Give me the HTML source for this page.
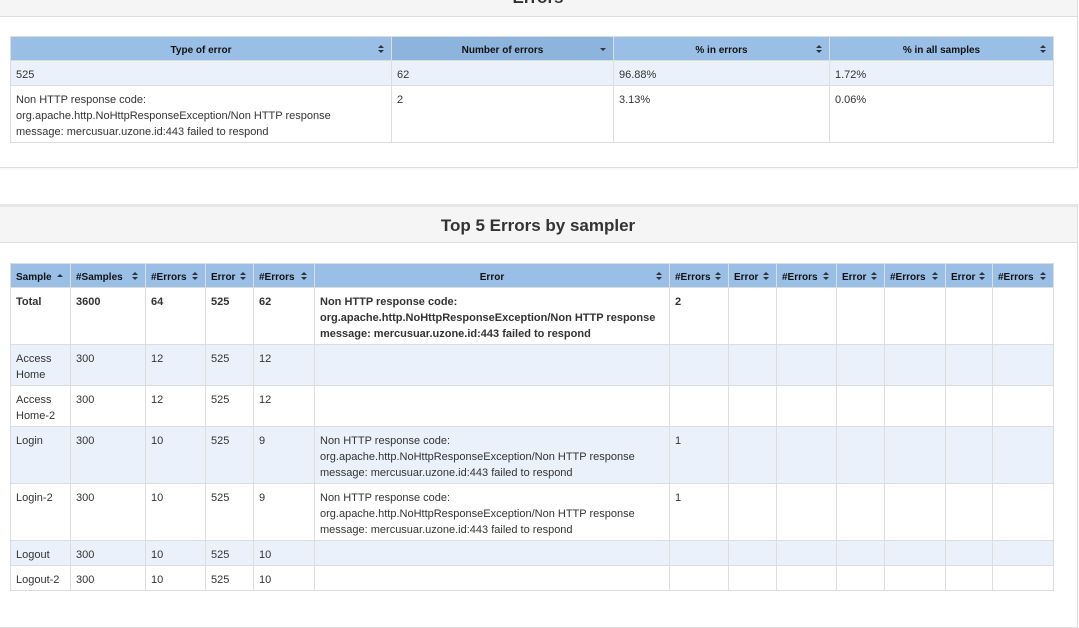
<!DOCTYPE html><html><head><style>
body{margin:0;width:1079px;height:610px;overflow:hidden;background:#fff;font-family:"Liberation Sans",Arial,sans-serif;color:#333;font-size:11px;position:relative}
.panel{position:absolute;left:-2px;width:1078px;border:1px solid #ddd;background:#fff;box-shadow:0 1px 2px rgba(0,0,0,.05)}
.ph{background:#f5f5f5;border-bottom:1px solid #ddd;text-align:center;font-weight:bold;font-size:17px;color:#333}
table{position:absolute;left:10px;border-collapse:collapse;table-layout:fixed;width:1043px}
td,th{border:1px solid #ddd;vertical-align:top;padding:6px 5px 0 5px;line-height:16px;overflow:hidden;white-space:nowrap}
th{background:#99bfe6;font-size:10px;text-align:center;padding:4px 5px 0;vertical-align:middle;position:relative;color:#111}
th.s{background:#8cb4dd}
th i{position:absolute;right:6px;top:8px;width:7px;height:8px}
th i:before,th i:after{content:"";position:absolute;left:0;border-left:3.5px solid transparent;border-right:3.5px solid transparent}
th i:before{top:0;border-bottom:3.5px solid #333}
th i:after{bottom:0;border-top:3.5px solid #333}
th i.u:after,th i.d:before{display:none}
th i.u:before{top:2px}
th i.d:after{bottom:2px}
tr.o td{background:#eaf1fa}
.b td{font-weight:bold}
</style></head><body>
<div class="panel" style="top:-10px;height:176px"><div class="ph" style="height:25px;line-height:14px;overflow:hidden">Errors</div></div>
<table style="top:36px">
<colgroup><col style="width:381px"><col style="width:222px"><col style="width:216px"><col style="width:224px"></colgroup>
<tr style="height:24px"><th>Type of error<i></i></th><th class="s">Number of errors<i class="d"></i></th><th>% in errors<i></i></th><th>% in all samples<i></i></th></tr>
<tr class="o" style="height:25px"><td>525</td><td>62</td><td>96.88%</td><td>1.72%</td></tr>
<tr style="height:57px"><td>Non HTTP response code:<br>org.apache.http.NoHttpResponseException/Non HTTP response<br>message: mercusuar.uzone.id:443 failed to respond</td><td>2</td><td>3.13%</td><td>0.06%</td></tr>
</table>
<div class="panel" style="top:204px;height:420px;border-top:3px solid #e6e6e6"><div class="ph" style="height:35px;line-height:38px">Top 5 Errors by sampler</div></div>
<table style="top:263px">
<colgroup><col style="width:60px"><col style="width:75px"><col style="width:60px"><col style="width:48px"><col style="width:61px"><col style="width:355px"><col style="width:59px"><col style="width:48px"><col style="width:60px"><col style="width:48px"><col style="width:61px"><col style="width:47px"><col style="width:61px"></colgroup>
<tr style="height:24px"><th style="text-align:left">Sample<i class="u"></i></th><th style="text-align:left">#Samples<i></i></th><th style="text-align:left">#Errors<i></i></th><th style="text-align:left">Error<i></i></th><th style="text-align:left">#Errors<i></i></th><th>Error<i></i></th><th style="text-align:left">#Errors<i></i></th><th style="text-align:left">Error<i></i></th><th style="text-align:left">#Errors<i></i></th><th style="text-align:left">Error<i></i></th><th style="text-align:left">#Errors<i></i></th><th style="text-align:left">Error<i></i></th><th style="text-align:left">#Errors<i></i></th></tr>
<tr class="b" style="height:57px"><td>Total</td><td>3600</td><td>64</td><td>525</td><td>62</td><td>Non HTTP response code:<br>org.apache.http.NoHttpResponseException/Non HTTP response<br>message: mercusuar.uzone.id:443 failed to respond</td><td>2</td><td></td><td></td><td></td><td></td><td></td><td></td></tr>
<tr class="o" style="height:41px"><td>Access<br>Home</td><td>300</td><td>12</td><td>525</td><td>12</td><td></td><td></td><td></td><td></td><td></td><td></td><td></td><td></td></tr>
<tr style="height:41px"><td>Access<br>Home-2</td><td>300</td><td>12</td><td>525</td><td>12</td><td></td><td></td><td></td><td></td><td></td><td></td><td></td><td></td></tr>
<tr class="o" style="height:57px"><td>Login</td><td>300</td><td>10</td><td>525</td><td>9</td><td>Non HTTP response code:<br>org.apache.http.NoHttpResponseException/Non HTTP response<br>message: mercusuar.uzone.id:443 failed to respond</td><td>1</td><td></td><td></td><td></td><td></td><td></td><td></td></tr>
<tr style="height:57px"><td>Login-2</td><td>300</td><td>10</td><td>525</td><td>9</td><td>Non HTTP response code:<br>org.apache.http.NoHttpResponseException/Non HTTP response<br>message: mercusuar.uzone.id:443 failed to respond</td><td>1</td><td></td><td></td><td></td><td></td><td></td><td></td></tr>
<tr class="o" style="height:25px"><td>Logout</td><td>300</td><td>10</td><td>525</td><td>10</td><td></td><td></td><td></td><td></td><td></td><td></td><td></td><td></td></tr>
<tr style="height:25px"><td>Logout-2</td><td>300</td><td>10</td><td>525</td><td>10</td><td></td><td></td><td></td><td></td><td></td><td></td><td></td><td></td></tr>
</table>
</body></html>
